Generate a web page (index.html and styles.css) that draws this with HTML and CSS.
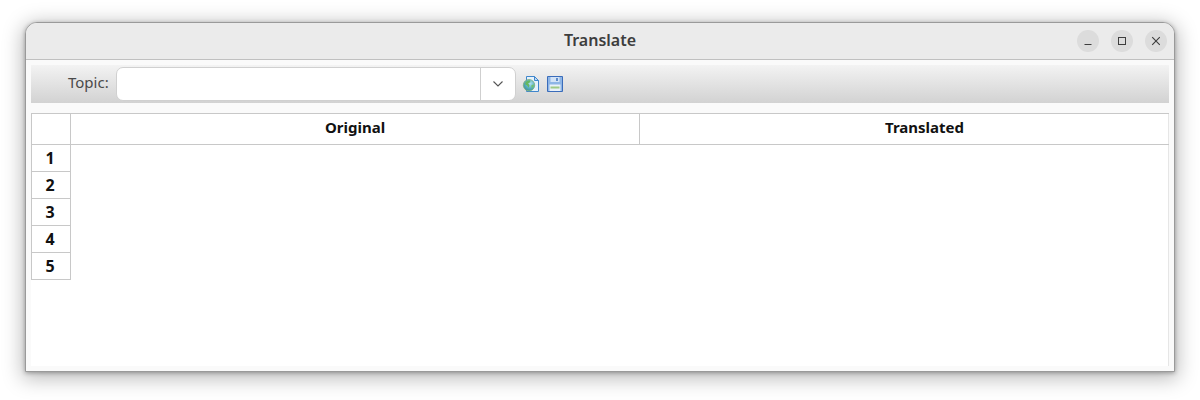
FILE: index.html
```html
<!DOCTYPE html>
<html lang="en">
<head>
<meta charset="utf-8">
<title>Translate</title>
<link rel="stylesheet" href="styles.css">
</head>
<body>
<div class="window">
  <header class="titlebar">
    <div class="title">Translate</div>
    <div class="controls">
      <button class="ctl" aria-label="Minimize"><svg width="10" height="10" viewBox="0 0 10 10"><path d="M1.5 8.5h7" stroke="#3d3d3d" stroke-width="1" fill="none"/></svg></button>
      <button class="ctl" aria-label="Maximize"><svg width="10" height="10" viewBox="0 0 10 10"><rect x="1.5" y="1.5" width="7" height="7" stroke="#3d3d3d" stroke-width="1" fill="none"/></svg></button>
      <button class="ctl" aria-label="Close"><svg width="10" height="10" viewBox="0 0 10 10"><path d="M1.2 1.2l7.6 7.6M8.8 1.2l-7.6 7.6" stroke="#3d3d3d" stroke-width="1.1" fill="none"/></svg></button>
    </div>
  </header>
  <main class="content">
    <div class="toolbar">
      <span class="label">Topic:</span>
      <div class="combo">
        <div class="combo-field"></div>
        <div class="combo-btn"><svg width="12" height="8" viewBox="0 0 12 8"><path d="M1.5 1.5L6 6l4.5-4.5" stroke="#555" stroke-width="1.1" fill="none"/></svg></div>
      </div>
      <svg class="tool" width="18" height="18" viewBox="0 0 18 18">
        <defs>
          <radialGradient id="globe" cx="0.6" cy="0.35" r="0.75">
            <stop offset="0" stop-color="#b4e2ee"/>
            <stop offset="0.55" stop-color="#56aec4"/>
            <stop offset="1" stop-color="#3a8c86"/>
          </radialGradient>
        </defs>
        <path d="M4.500 1.500h8l4 4v11h-12z" fill="#e6f1fb" stroke="#3f86cc"/>
        <path d="M12.500 1.500v4h4z" fill="#bcd8f2" stroke="#3f86cc"/>
        <circle cx="7" cy="10.200" r="5.700" fill="url(#globe)" stroke="#7db07c" stroke-width="0.800"/>
        <path d="M3.200 8c1-1.800 2.800-2.800 4.800-2.600l.4 1.800-2.300 1 1.400 2-1 2.600-1.400-2.200-1.800-1z" fill="#66b85f"/>
        <path d="M9.200 10.500l2.300-1.300.4 1.900-2.100 2.300z" fill="#74c26c"/>
      </svg>
      <svg class="tool" width="18" height="18" viewBox="0 0 18 18">
        <path d="M1.500 1.500h15v15h-15z" fill="#8db5e6" stroke="#3a6cba"/>
        <rect x="4.500" y="2" width="9" height="5" fill="#d3e3f6"/>
        <rect x="10" y="3" width="2" height="3" fill="#5f8cca"/>
        <rect x="3.500" y="9.500" width="11" height="6.500" fill="#e9f1fa"/>
        <rect x="4.500" y="11.500" width="9" height="2" fill="#9ec986"/>
      </svg>
    </div>
    <div class="table">
      <div class="head">
        <div class="corner"></div>
        <div class="col col-a">Original</div>
        <div class="col col-b">Translated</div>
      </div>
      <div class="rows">
        <div class="row">1</div>
        <div class="row">2</div>
        <div class="row">3</div>
        <div class="row">4</div>
        <div class="row">5</div>
      </div>
    </div>
  </main>
</div>
</body>
</html>
```
FILE: styles.css
```css
* { box-sizing: border-box; }
html, body { margin: 0; height: 100%; background: #fff; overflow: hidden; }
body { padding: 22px 25px 28px; font-family: "Noto Sans", sans-serif; }
.window {
  width: 1150px;
  height: 350px;
  display: flex;
  flex-direction: column;
  background: #fafafa;
  border: 1px solid #9a9a9a;
  border-radius: 12px 12px 0 0;
  box-shadow: 0 1px 4px rgba(0, 0, 0, 0.3), 0 4px 20px 3px rgba(0, 0, 0, 0.26);
  overflow: hidden;
}
.titlebar {
  height: 37px;
  flex: none;
  display: flex;
  align-items: center;
  justify-content: center;
  position: relative;
  background: #ebebeb;
  border-bottom: 1px solid #c0c0c0;
  padding-bottom: 3px;
}
.title { font-size: 16px; font-weight: 600; line-height: 20px; color: #3d3d3d; }
.controls {
  position: absolute;
  right: 7px;
  top: 7px;
  display: flex;
  gap: 12px;
}
.ctl {
  width: 22px;
  height: 22px;
  padding: 0;
  border: 0;
  border-radius: 50%;
  background: #dcdcdc;
  display: flex;
  align-items: center;
  justify-content: center;
}
.content {
  flex: 1;
  display: flex;
  flex-direction: column;
  gap: 10px;
  padding: 5px;
  min-height: 0;
}
.toolbar {
  height: 38px;
  flex: none;
  display: flex;
  align-items: center;
  padding-left: 37px;
  background: linear-gradient(#f3f3f3, #d2d2d2);
}
.label { font-size: 15px; line-height: 18px; color: #4a4a4a; margin: -4px 7px 0 0; }
.combo {
  width: 400px;
  height: 34px;
  display: flex;
  background: #fff;
  border: 1px solid #d0d0d0;
  border-radius: 7px;
  margin-right: 6px;
}
.combo-field { flex: 1; }
.combo-btn {
  width: 35px;
  display: flex;
  align-items: center;
  justify-content: center;
  border-left: 1px solid #cfcfcf;
}
.tool { margin-right: 6px; flex: none; }
.table {
  flex: 1;
  min-height: 0;
  background: #fff;
  border-top: 1px solid #c8c8c8;
  box-shadow: inset -1px 0 0 #e6e6e6;
  overflow: hidden;
}
.head {
  height: 31px;
  display: flex;
  border-bottom: 1px solid #c8c8c8;
}
.corner { width: 40px; flex: none; border-left: 1px solid #c8c8c8; border-right: 1px solid #c8c8c8; }
.col {
  display: flex;
  align-items: center;
  justify-content: center;
  width: 569px;
  flex: none;
  font-size: 15px;
  line-height: 18px;
  font-weight: 700;
  color: #111;
  padding-bottom: 5px;
}
.col-a { border-right: 1px solid #c8c8c8; }
.rows { width: 40px; }
.row {
  height: 27px;
  display: flex;
  align-items: center;
  justify-content: center;
  font-size: 16px;
  line-height: 18px;
  font-weight: 700;
  color: #111;
  border-left: 1px solid #c8c8c8;
  border-right: 1px solid #c8c8c8;
  border-bottom: 1px solid #c8c8c8;
  padding: 0 2px 0 0;
}
```
